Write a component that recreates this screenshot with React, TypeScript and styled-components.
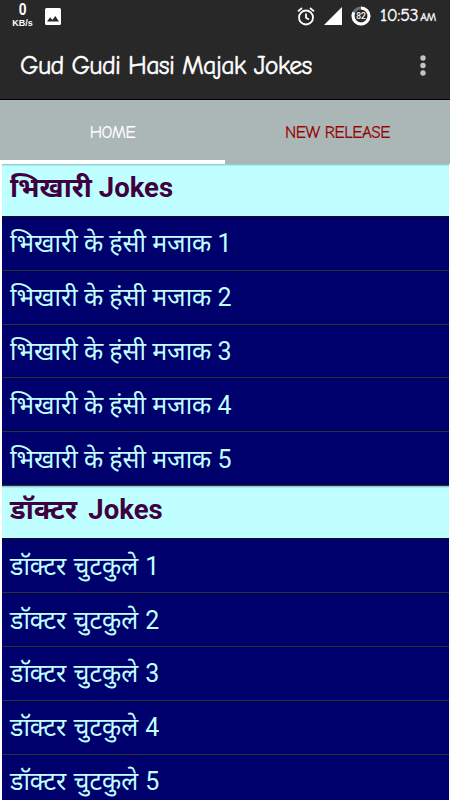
import React from "react";
import styled, { createGlobalStyle } from "styled-components";

const GlobalStyle = createGlobalStyle`
  * { box-sizing: border-box; }
  html, body { margin: 0; padding: 0; background: #fff; overflow: hidden; }
`;

const hand = `"Comic Neue", "Open Sans", sans-serif`;

const Screen = styled.div`
  width: 450px;
  height: 800px;
  overflow: hidden;
  display: flex;
  flex-direction: column;
  background: #fff;
  font-family: Roboto, "Noto Sans Devanagari", "Noto Sans", sans-serif;
`;

const StatusBar = styled.div`
  flex: none;
  height: 32px;
  padding: 0 9px 0 12px;
  background: #282828;
  color: #fff;
  display: flex;
  align-items: center;
  justify-content: space-between;
`;

const StatusGroup = styled.div<{ $gap: number }>`
  display: flex;
  align-items: center;
  gap: ${(p) => p.$gap}px;
`;

const Speed = styled.div`
  width: 21px;
  display: flex;
  flex-direction: column;
  align-items: center;
  margin-top: -4px;
`;

const SpeedValue = styled.span`
  font: bold 16px/18px Roboto, sans-serif;
  transform: scaleX(0.85);
`;

const SpeedUnit = styled.span`
  font: bold 9px/9px "Liberation Sans", sans-serif;
  white-space: nowrap;
`;

const Clock = styled.div`
  width: 61px;
  padding-top: 2px;
  font: 18px/20px ${hand};
  letter-spacing: -0.4px;
  -webkit-text-stroke: 0.3px #fff;
  white-space: nowrap;
`;

const Meridiem = styled.span`
  font-size: 11.5px;
  margin-left: 2px;
`;

const AppBar = styled.header`
  flex: none;
  height: 68px;
  padding: 0 17px 0 20px;
  background: #282828;
  border-bottom: 1px solid #000;
  display: flex;
  align-items: center;
  justify-content: space-between;
`;

const Title = styled.h1`
  margin: 0;
  color: #fff;
  font: 400 26px/36px ${hand};
  letter-spacing: -0.73px;
  -webkit-text-stroke: 0.5px #fff;
  white-space: nowrap;
`;

const Tabs = styled.nav`
  flex: none;
  height: 64px;
  display: flex;
  background: #abb7b7;
`;

const Tab = styled.div<{ $active?: boolean }>`
  flex: 1;
  display: flex;
  align-items: center;
  justify-content: center;
  padding-top: 6px;
  border-bottom: 4px solid ${(p) => (p.$active ? "#fff" : "transparent")};
  color: ${(p) => (p.$active ? "#fff" : "#960000")};
  font: 400 17px/20px ${hand};
  letter-spacing: -0.5px;
  -webkit-text-stroke: 0.2px;
`;

const List = styled.main`
  flex: 1;
  min-height: 0;
  overflow: hidden;
  margin: 0 1px 0 2px;
  background: #00006c;
`;

const SectionHeader = styled.h2<{ $height: number; $wordGap: number }>`
  margin: 0;
  height: ${(p) => p.$height}px;
  padding: 0 8px 4px;
  display: flex;
  align-items: center;
  background: #bfffff;
  box-shadow: inset 0 2px 2px -1px rgba(0, 60, 60, 0.35);
  border-bottom: 1px solid #101018;
  color: #400040;
  font-size: 27.5px;
  line-height: 36px;
  font-weight: 700;
  word-spacing: ${(p) => p.$wordGap}px;
  white-space: nowrap;
`;

const Row = styled.div<{ $wordGap: number }>`
  height: 53.8px;
  padding: 2px 8px 0;
  display: flex;
  align-items: center;
  border-bottom: 1.5px solid #303030;
  color: #bfffff;
  font-size: 25px;
  line-height: 36px;
  word-spacing: ${(p) => p.$wordGap}px;
  white-space: nowrap;
`;

const sections = [
  { title: "भिखारी Jokes", item: "भिखारी के हंसी मजाक", height: 53, titleGap: 0, itemGap: 0 },
  { title: "डॉक्टर Jokes", item: "डॉक्टर चुटकुले", height: 53.5, titleGap: 4.5, itemGap: 1 },
];

const ImageIcon = () => (
  <svg width="16" height="17" viewBox="0 0 16 17">
    <rect width="16" height="17" rx="1.5" fill="#fff" />
    <path d="M2 13.5 5.2 9.2 7.4 12 10.3 8 14 13.5Z" fill="#282828" />
  </svg>
);

const AlarmIcon = () => (
  <svg width="18" height="19" viewBox="0 0 18 19" fill="none" stroke="#fff" strokeWidth="1.8">
    <circle cx="9" cy="10.5" r="7" />
    <path d="M9 6.5v4.3l3 1.8M1 4.4 5 1M17 4.4 13 1" />
  </svg>
);

const SignalIcon = () => (
  <svg width="18" height="18" viewBox="0 0 18 18">
    <path d="M18 0V18H0Z" fill="#fff" />
  </svg>
);

const BatteryIcon = () => (
  <svg width="20" height="20" viewBox="0 0 20 20">
    <circle cx="10" cy="10" r="8" fill="none" stroke="#707070" strokeWidth="3" />
    <circle
      cx="10" cy="10" r="8" fill="none" stroke="#fff" strokeWidth="3"
      strokeDasharray="41.2 50.3" transform="rotate(-90 10 10)"
    />
    <text x="10" y="13" textAnchor="middle" fontFamily="Roboto, sans-serif" fontSize="8.5" fontWeight="500" fill="#fff">82</text>
  </svg>
);

const MenuIcon = () => (
  <svg width="20" height="22" viewBox="0 0 20 22" fill="#c4c4c4">
    <circle cx="10" cy="3" r="2.7" />
    <circle cx="10" cy="10.5" r="2.7" />
    <circle cx="10" cy="18" r="2.7" />
  </svg>
);

export default function App() {
  return (
    <Screen>
      <GlobalStyle />
      <StatusBar>
        <StatusGroup $gap={12}>
          <Speed>
            <SpeedValue>0</SpeedValue>
            <SpeedUnit>KB/s</SpeedUnit>
          </Speed>
          <ImageIcon />
        </StatusGroup>
        <StatusGroup $gap={9}>
          <AlarmIcon />
          <SignalIcon />
          <BatteryIcon />
          <Clock>
            10:53<Meridiem>AM</Meridiem>
          </Clock>
        </StatusGroup>
      </StatusBar>
      <AppBar>
        <Title>Gud Gudi Hasi Majak Jokes</Title>
        <MenuIcon />
      </AppBar>
      <Tabs>
        <Tab $active>HOME</Tab>
        <Tab>NEW RELEASE</Tab>
      </Tabs>
      <List>
        {sections.map((section) => (
          <React.Fragment key={section.title}>
            <SectionHeader $height={section.height} $wordGap={section.titleGap}>
              {section.title}
            </SectionHeader>
            {[1, 2, 3, 4, 5].map((n) => (
              <Row key={n} $wordGap={section.itemGap}>
                {section.item} {n}
              </Row>
            ))}
          </React.Fragment>
        ))}
      </List>
    </Screen>
  );
}
